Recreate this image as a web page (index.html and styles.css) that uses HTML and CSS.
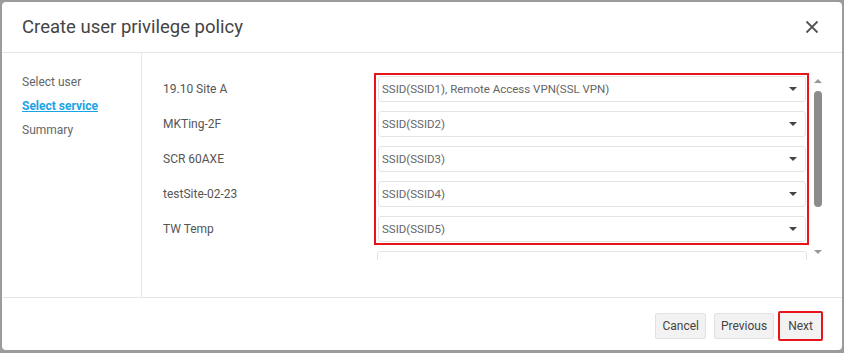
FILE: index.html
```html
<!DOCTYPE html>
<html lang="en">
<head>
  <meta charset="UTF-8" />
  <title>Create user privilege policy</title>
  <link rel="stylesheet" href="styles.css">
</head>
<body>
  <div class="dialog">
    <div class="dialog-header">
      <h2>Create user privilege policy</h2>
      <button class="close-btn" aria-label="Close">
        <svg width="14" height="14" viewBox="0 0 14 14"><path d="M1.5 1.5 L12.5 12.5 M12.5 1.5 L1.5 12.5" stroke="#555" stroke-width="1.8" fill="none"/></svg>
      </button>
    </div>

    <div class="dialog-body">
      <ul class="steps">
        <li>Select user</li>
        <li class="active">Select service</li>
        <li>Summary</li>
      </ul>

      <div class="content">
        <div class="scroll-box">
          <div class="site-labels">
            <div class="site-label">19.10 Site A</div>
            <div class="site-label">MKTing-2F</div>
            <div class="site-label">SCR 60AXE</div>
            <div class="site-label">testSite-02-23</div>
            <div class="site-label">TW Temp</div>
          </div>
          <div class="site-selects">
            <div class="highlight">
              <div class="select">SSID(SSID1), Remote Access VPN(SSL VPN)<span class="caret"></span></div>
              <div class="select">SSID(SSID2)<span class="caret"></span></div>
              <div class="select">SSID(SSID3)<span class="caret"></span></div>
              <div class="select">SSID(SSID4)<span class="caret"></span></div>
              <div class="select">SSID(SSID5)<span class="caret"></span></div>
            </div>
            <div class="select extra"></div>
          </div>
        </div>
        <div class="scrollbar">
          <span class="arrow up"></span>
          <div class="track"><div class="thumb"></div></div>
          <span class="arrow down"></span>
        </div>
      </div>
    </div>

    <div class="dialog-footer">
      <button class="btn">Cancel</button>
      <button class="btn">Previous</button>
      <button class="btn next">Next</button>
    </div>
  </div>
</body>
</html>
```

FILE: styles.css
```css
* {
  box-sizing: border-box;
}
body {
  margin: 0;
  background: #9b9b9b;
  font-family: Roboto, 'Liberation Sans', sans-serif;
  color: #555;
}
.dialog {
  margin: 2px;
  width: 840px;
  height: 348px;
  background: #fff;
  border-radius: 4px;
  display: flex;
  flex-direction: column;
  overflow: hidden;
}
.dialog-header {
  height: 51px;
  flex-shrink: 0;
  border-bottom: 1px solid #e6e6e6;
  display: flex;
  align-items: center;
  justify-content: space-between;
  padding: 0 23px 0 20px;
}
.dialog-header h2 {
  margin: 0;
  font-size: 18.5px;
  font-weight: 400;
  color: #444;
}
.close-btn {
  border: none;
  background: none;
  padding: 0;
  width: 14px;
  height: 14px;
  cursor: pointer;
}
.dialog-body {
  flex: 1;
  display: flex;
  min-height: 0;
}
.steps {
  list-style: none;
  margin: 0;
  padding: 17px 0 0 20px;
  width: 140px;
  border-right: 1px solid #e6e6e6;
}
.steps li {
  font-size: 12px;
  line-height: 24px;
  color: #666;
}
.steps li.active {
  color: #19a4e6;
  font-weight: 700;
  text-decoration: underline;
}
.content {
  flex: 1;
  display: flex;
  padding: 20px 18px 0 21px;
}
.scroll-box {
  height: 187px;
  overflow: hidden;
  display: flex;
}
.site-labels {
  width: 211px;
  padding-top: 3px;
}
.site-label {
  height: 35px;
  line-height: 26px;
  font-size: 12px;
  color: #555;
}
.site-selects {
  width: 435px;
}
.highlight {
  border: 2px solid #e8141b;
  padding: 1px 1px 1px 2px;
  display: flex;
  flex-direction: column;
  gap: 9px;
}
.select {
  height: 26px;
  border: 1px solid #e4e4e4;
  border-radius: 3px;
  display: flex;
  align-items: center;
  justify-content: space-between;
  padding: 0 8px 0 3px;
  font-size: 11.5px;
  color: #666;
}
.select.extra {
  margin: 6px 2px 0 3px;
}
.caret {
  width: 0;
  height: 0;
  border-left: 4px solid transparent;
  border-right: 4px solid transparent;
  border-top: 4px solid #444;
}
.scrollbar {
  width: 12px;
  margin-left: 3px;
  margin-top: 6px;
  height: 175px;
  display: flex;
  flex-direction: column;
  align-items: center;
}
.arrow {
  width: 0;
  height: 0;
  border-left: 4px solid transparent;
  border-right: 4px solid transparent;
}
.arrow.up {
  border-bottom: 4px solid #999;
}
.arrow.down {
  border-top: 4px solid #999;
}
.track {
  flex: 1;
  width: 8px;
  padding: 8px 0 0;
}
.thumb {
  height: 116px;
  background: #8c8c8c;
  border-radius: 4px;
}
.dialog-footer {
  height: 53px;
  flex-shrink: 0;
  border-top: 1px solid #e6e6e6;
  display: flex;
  justify-content: flex-end;
  align-items: flex-start;
  padding: 15px 19px 0 0;
  gap: 8px;
}
.btn {
  height: 26px;
  padding: 0 6px;
  font-family: inherit;
  font-size: 12px;
  color: #444;
  background: #f2f2f2;
  border: 1px solid #e2e2e2;
  border-radius: 2px;
}
.btn.next {
  margin-left: -4px;
  height: 30px;
  margin-top: -2px;
  padding: 0 8px;
  border: 2px solid #e8141b;
}
```
